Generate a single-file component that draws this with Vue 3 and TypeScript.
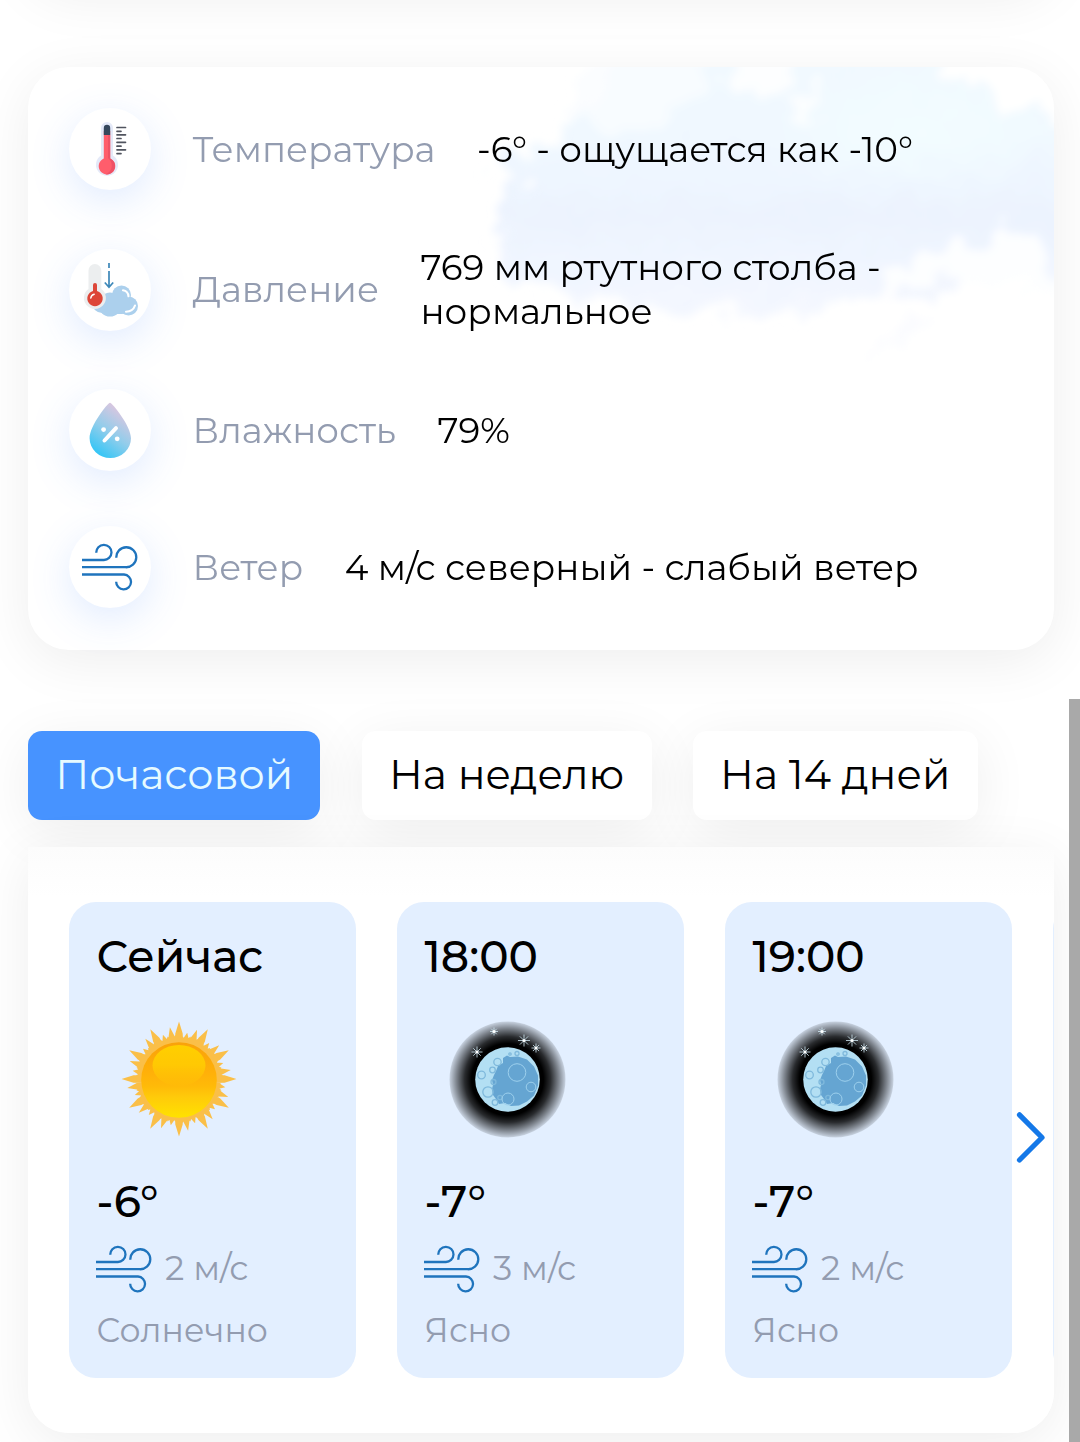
<script setup lang="ts">
type IconName = 'thermo' | 'pressure' | 'drop' | 'wind'

interface Detail {
  icon: IconName
  label: string
  lines: string[]
}

interface Hour {
  time: string
  sky: 'sun' | 'moon'
  temp: string
  wind: string
  text: string
}

const details: Detail[] = [
  { icon: 'thermo', label: 'Температура', lines: ['-6° - ощущается как -10°'] },
  { icon: 'pressure', label: 'Давление', lines: ['769 мм ртутного столба -', 'нормальное'] },
  { icon: 'drop', label: 'Влажность', lines: ['79%'] },
  { icon: 'wind', label: 'Ветер', lines: ['4 м/с северный - слабый ветер'] },
]

const tabs = [
  { text: 'Почасовой', active: true },
  { text: 'На неделю', active: false },
  { text: 'На 14 дней', active: false },
]

const hours: Hour[] = [
  { time: 'Сейчас', sky: 'sun', temp: '-6°', wind: '2 м/с', text: 'Солнечно' },
  { time: '18:00', sky: 'moon', temp: '-7°', wind: '3 м/с', text: 'Ясно' },
  { time: '19:00', sky: 'moon', temp: '-7°', wind: '2 м/с', text: 'Ясно' },
]

// One pointed ray every 5 degrees; the lengths repeat every 30 degrees.
const rayLengths = [57.5, 43, 47, 44, 52.5, 44]
const rays = Array.from({ length: 72 }, (_, i) => {
  const a = (i * Math.PI * 2) / 72
  const r = rayLengths[i % 6]
  const w = i % 6 === 0 ? 0.1 : 0.085
  const p = (rad: number, ang: number) =>
    `${(58 + rad * Math.sin(ang)).toFixed(1)} ${(58 - rad * Math.cos(ang)).toFixed(1)}`
  const mid = 36 + (r - 36) * 0.45
  return `M${p(34, a - w * 1.2)}L${p(mid, a - w * 0.8)}L${p(r, a)}L${p(mid, a + w * 0.8)}L${p(34, a + w * 1.2)}Z`
}).join('')

const stars = [
  { x: 28, y: 31, r: 5.5 },
  { x: 45, y: 10.5, r: 4 },
  { x: 75, y: 19.5, r: 6 },
  { x: 87, y: 27, r: 4.5 },
]
const starPath = (s: { x: number; y: number; r: number }) => {
  const d = s.r * 0.68
  return `M${s.x - s.r} ${s.y}h${2 * s.r}M${s.x} ${s.y - s.r}v${2 * s.r}M${s.x - d} ${s.y - d}l${2 * d} ${2 * d}M${s.x + d} ${s.y - d}l${-2 * d} ${2 * d}`
}
const windPath =
  'M0 17H21.500A7.600 7.600 0 1 0 14.300 9.800M0 24.200H43.500A10 10 0 1 0 34.300 14.800M0 31.500H42A7.400 7.400 0 1 1 34.200 38.800'
</script>

<template>
  <main class="screen">
    <div class="card previous"></div>

    <section class="card details">
      <svg class="sky" width="586" height="330" viewBox="0 0 586 330" aria-hidden="true">
        <defs>
          <linearGradient id="skyFill" x1="0" y1="0" x2="0" y2="1">
            <stop offset="0" stop-color="#f1f9ff" />
            <stop offset=".35" stop-color="#f0f8ff" />
            <stop offset=".62" stop-color="#ecf3fe" />
            <stop offset="1" stop-color="#f5f8ff" />
          </linearGradient>
          <radialGradient id="skyGlow">
            <stop offset="0" stop-color="#f3fdff" />
            <stop offset="1" stop-color="#f3fdff" stop-opacity="0" />
          </radialGradient>
          <filter id="rough" x="-10%" y="-10%" width="120%" height="120%">
            <feTurbulence type="fractalNoise" baseFrequency=".04" numOctaves="5" seed="11" />
            <feDisplacementMap in="SourceGraphic" scale="52" xChannelSelector="R" yChannelSelector="G" />
            <feGaussianBlur stdDeviation="4" />
          </filter>
        </defs>
        <g filter="url(#rough)">
          <path d="M148-20H610V238L560 222L500 215L450 232L420 232L380 232L340 246L290 251L240 248L200 238L130 240L80 226L40 206L24 180L36 145L48 120L28 104L34 80L60 86L88 72L100 52L124 36L146 20Z" fill="url(#skyFill)" />
          <ellipse cx="450" cy="65" rx="150" ry="70" fill="url(#skyGlow)" />
          <path d="M130-20L245-20L230 30L200 55L150 62L100 50Z" fill="#fafdff" opacity=".8" />
          <path d="M270-20H328L322 18L312 32L300 30L290 40L278 26L258 14Z" fill="#fff" opacity=".85" />
          <path d="M318 36L352 18L356 34L340 56L322 48Z" fill="#fff" opacity=".75" />
          <path d="M452-20H610V54L568 36L544 36L522 20L490 10Z" fill="#fff" opacity=".95" />
          <path d="M395 250L415 205L450 192L485 180L520 180L548 160L570 172L576 200L610 235V340H380Z" fill="#fff" opacity=".86" />
          <path d="M425 230L455 210L484 200L480 222L450 238Z" fill="#f2f6fe" />
          <path d="M400 298L430 262L450 250L460 262L436 276Z" fill="#fbfcff" />
        </g>
      </svg>

      <div v-for="d in details" :key="d.label" class="row" :class="{ tall: d.lines.length > 1 }">
        <span class="badge">
          <svg v-if="d.icon === 'thermo'" width="82" height="82" viewBox="0 0 82 82">
            <path d="M32 20a6 6 0 0 1 12 0V47.500a11 11 0 1 1-12 0Z" fill="#e4e9f8" />
            <path d="M34.800 23h6.400V50.500a8.300 8.300 0 1 1-6.400 0Z" fill="#ff5d6c" />
            <path d="M39 27h2.200V50.500a8.300 8.300 0 0 1-4.500 15.800C46 62 43 53 39 50Z" fill="#ee5166" />
            <path d="M34.800 27V20a3.200 3.200 0 0 1 6.400 0v7Z" fill="#35475c" />
            <path d="M48 19.500h8.500M48 23.300h4M48 26.800h8.500M48 30.500h4M48 34.300h8.500M48 38.200h4M48 41.800h8.500M48 45.600h4" stroke="#50545f" stroke-width="1.700" stroke-linecap="round" />
          </svg>
          <svg v-else-if="d.icon === 'pressure'" width="82" height="82" viewBox="0 0 82 82">
            <g fill="#acd0ed">
              <circle cx="33" cy="54" r="10" />
              <circle cx="41" cy="56" r="11.500" />
              <circle cx="41" cy="52" r="8.500" />
              <circle cx="52.500" cy="46" r="9.500" />
              <circle cx="59.500" cy="57" r="9.500" />
              <rect x="35" y="48" width="26" height="17" rx="8" />
            </g>
            <path d="M54 41.300q5 .8 5.500 6M66 56.500q-2 6-9 6.200" fill="none" stroke="#fff" stroke-width="2.100" stroke-linecap="round" />
            <path d="M19.500 21.500a6.400 6.400 0 0 1 12.800 0V40a11 11 0 1 1-12.800 0Z" fill="#eceeef" />
            <path d="M24 36a2 2 0 0 1 4 0V42a7.700 7.700 0 1 1-4 0Z" fill="#dd4638" />
            <path d="M21.800 49q.5-3 3.400-3.700" fill="none" stroke="#fff" stroke-width="1.500" stroke-linecap="round" />
            <path d="M40 14v5M40 22v16M35.800 33.500L40 38.200l4.200-4.700" fill="none" stroke="#3c87b8" stroke-width="1.700" />
          </svg>
          <svg v-else-if="d.icon === 'drop'" width="82" height="82" viewBox="0 0 82 82">
            <defs>
              <linearGradient id="dropFill" x1=".75" y1=".1" x2=".25" y2="1">
                <stop offset="0" stop-color="#ddc6df" />
                <stop offset=".5" stop-color="#91cdeb" />
                <stop offset="1" stop-color="#2dc5f7" />
              </linearGradient>
            </defs>
            <path d="M41 13.800C43 13.600 62 37 62 49.200A20.700 19.800 0 0 1 20.600 49.200C20.600 37 39 13.600 41 13.800Z" fill="url(#dropFill)" />
            <path d="M35.500 51.500L47 39.200" stroke="#fff" stroke-width="4" stroke-linecap="round" />
            <circle cx="34.600" cy="40.600" r="2.400" fill="#fff" />
            <circle cx="48.200" cy="49.800" r="2.400" fill="#fff" />
          </svg>
          <svg v-else width="56" height="48" viewBox="0 0 56 48" class="wind">
            <path :d="windPath" />
          </svg>
        </span>
        <span class="label">{{ d.label }}</span>
        <span class="value">
          <span v-for="l in d.lines" :key="l" class="line">{{ l }}</span>
        </span>
      </div>
    </section>

    <nav class="tabs">
      <button v-for="t in tabs" :key="t.text" type="button" class="tab" :class="{ active: t.active }">{{ t.text }}</button>
    </nav>

    <section class="panel">
      <div class="track">
        <article v-for="(h, i) in hours" :key="h.time" class="hour">
          <h3 class="time">{{ h.time }}</h3>
          <svg v-if="h.sky === 'sun'" class="weather" width="117" height="117" viewBox="0 0 117 117">
            <defs>
              <linearGradient id="sunBody" x1="0" y1="0" x2="0" y2="1">
                <stop offset="0" stop-color="#f9a20a" />
                <stop offset=".4" stop-color="#ffb009" />
                <stop offset=".58" stop-color="#ffba08" />
                <stop offset=".72" stop-color="#ffca0a" />
                <stop offset="1" stop-color="#ffe200" />
              </linearGradient>
              <linearGradient id="sunShine" x1="0" y1="0" x2="0" y2="1">
                <stop offset="0" stop-color="#ffcf00" />
                <stop offset=".5" stop-color="#ffc803" />
                <stop offset="1" stop-color="#ffbb08" stop-opacity=".6" />
              </linearGradient>
            </defs>
            <path :d="rays" fill="#fabf48" />
            <circle cx="58" cy="59" r="37.800" fill="url(#sunBody)" />
            <ellipse cx="58" cy="44.500" rx="26.500" ry="20.500" fill="url(#sunShine)" />
          </svg>
          <svg v-else class="weather" width="117" height="117" viewBox="0 0 117 117">
            <defs>
              <radialGradient :id="'night' + i">
                <stop offset="0" stop-color="#000" />
                <stop offset=".62" stop-color="#000" />
                <stop offset=".74" stop-color="#000" stop-opacity=".82" />
                <stop offset=".88" stop-color="#000" stop-opacity=".45" />
                <stop offset="1" stop-color="#000" stop-opacity=".12" />
              </radialGradient>
            </defs>
            <circle cx="58.500" cy="58.500" r="58" :fill="`url(#night${i})`" />
            <circle cx="58.500" cy="58.500" r="32.300" fill="#b3dff3" />
            <path d="M54 37l4-2.500 3 1.500 8-.5 9 3 7 7 4 9v10l-4 10-7 6-8 4-8 .5-6-3-6 1-3-5-3-4-1-6 1-4-1-5 2-5 2-4 2-5 5-3Z" fill="#65a5d2" />
            <g fill="none" stroke="#7fb9dc" stroke-width="1.300">
              <circle cx="48.500" cy="41" r="3.700" />
              <circle cx="43.500" cy="49" r="2.800" />
              <circle cx="32.500" cy="54" r="3.800" />
              <circle cx="44.500" cy="61" r="2.500" />
              <circle cx="39" cy="71" r="5.200" />
              <circle cx="46" cy="81.500" r="2.800" />
              <circle cx="51" cy="76.500" r="2.200" />
              <circle cx="68" cy="32.500" r="2" />
              <circle cx="61" cy="33" r="1.200" />
            </g>
            <g fill="none" stroke="#9dd0ed" stroke-width="1">
              <circle cx="68" cy="51.500" r="8.800" />
              <circle cx="82" cy="66" r="4.800" />
              <circle cx="59" cy="78" r="6" />
            </g>
            <g stroke="#cfe8f4" stroke-width=".8">
              <path v-for="s in stars" :key="s.x" :d="starPath(s)" />
            </g>
            <circle v-for="s in stars" :key="s.y" :cx="s.x" :cy="s.y" r="1.500" fill="#fff" />
          </svg>
          <p class="temp">{{ h.temp }}</p>
          <div class="windline">
            <svg width="56" height="48" viewBox="0 0 56 48" class="wind"><path :d="windPath" /></svg>
            <span>{{ h.wind }}</span>
          </div>
          <p class="text">{{ h.text }}</p>
        </article>
        <article class="hour"></article>
      </div>
      <svg class="next" width="32" height="56" viewBox="0 0 32 56">
        <path d="M5.500 4.800L28 27.500L5.500 50" fill="none" stroke="#1478e8" stroke-width="5.200" stroke-linecap="round" stroke-linejoin="round" />
      </svg>
    </section>

    <div class="scrollbar"></div>
  </main>
</template>

<style>
body {
  margin: 0;
  background: #fff;
}
</style>

<style scoped>
* {
  box-sizing: border-box;
}
.screen {
  position: relative;
  width: 1080px;
  height: 1442px;
  overflow: hidden;
  padding-left: 28px;
  background: #fff;
  color: #000;
  font-family: Montserrat, Inter, "Open Sans", sans-serif;
  font-weight: 400;
}
.card {
  position: relative;
  width: 1026px;
  border-radius: 41px;
  background: #fff;
  box-shadow: 0 11px 55px rgba(0, 0, 0, 0.07);
}
.previous {
  height: 100px;
  margin-top: -115px;
}
.details {
  display: flex;
  flex-direction: column;
  gap: 55px;
  height: 583px;
  margin-top: 82px;
  padding: 41px;
}
.sky {
  position: absolute;
  top: 0;
  right: 0;
  border-top-right-radius: 41px;
}
.row {
  position: relative;
  display: flex;
  align-items: center;
  gap: 41.500px;
  min-height: 82.500px;
  font-size: 35.750px;
  line-height: 44px;
  white-space: nowrap;
}
.badge {
  display: flex;
  align-items: center;
  justify-content: center;
  flex: none;
  width: 82px;
  height: 82px;
  border-radius: 50%;
  background: #fff;
  box-shadow: 0 11px 40px rgba(72, 135, 255, 0.17);
}
.label {
  flex: none;
  color: #939cb0;
}
.tall .label,
.tall .value {
  padding-bottom: 2px;
}
.tall {
  height: 88px;
}
.line {
  display: block;
}
.wind {
  flex: none;
}
.wind path {
  fill: none;
  stroke: #1f74bd;
  stroke-width: 2.300;
}
.tabs {
  display: flex;
  gap: 41.250px;
  margin-top: 81px;
}
.tab {
  height: 89px;
  padding: 0 27.300px 3px;
  border: 0;
  border-radius: 14px;
  background: #fff;
  box-shadow: 0 11px 55px rgba(0, 0, 0, 0.07);
  color: #000;
  font: inherit;
  font-size: 41.250px;
  white-space: nowrap;
}
.tab.active {
  background: #4793ff;
  color: #e6faff;
}
.panel {
  position: relative;
  width: 1026px;
  height: 585.500px;
  margin-top: 27px;
  padding: 55px 0 0 41px;
  border-radius: 0 0 41px 41px;
  background: linear-gradient(#fcfcfc, #fff 50px);
  box-shadow: 0 11px 55px rgba(0, 0, 0, 0.07);
}
.track {
  display: flex;
  gap: 41px;
  overflow: hidden;
}
.hour {
  flex: none;
  width: 287px;
  height: 476px;
  padding: 27px 27.600px;
  border-radius: 27px;
  background: #e3efff;
}
.time,
.temp {
  margin: 0;
  font-size: 44px;
  font-weight: 500;
  line-height: 54px;
}
.weather {
  display: block;
  margin: 38px 0 0 24.400px;
}
.temp {
  margin-top: 36px;
}
.windline {
  display: flex;
  align-items: center;
  gap: 13px;
  height: 48px;
  margin: 17px 0 0 -0.600px;
  color: #939cb0;
  font-size: 34px;
}
.windline span {
  padding-bottom: 2px;
}
.text {
  margin: 15px 0 0;
  color: #939cb0;
  font-size: 33.200px;
  line-height: 44px;
}
.next {
  position: absolute;
  top: 263px;
  right: 8px;
}
.scrollbar {
  position: absolute;
  top: 699px;
  right: 0;
  width: 11px;
  height: 743px;
  background: #a9a9a9;
}
</style>
